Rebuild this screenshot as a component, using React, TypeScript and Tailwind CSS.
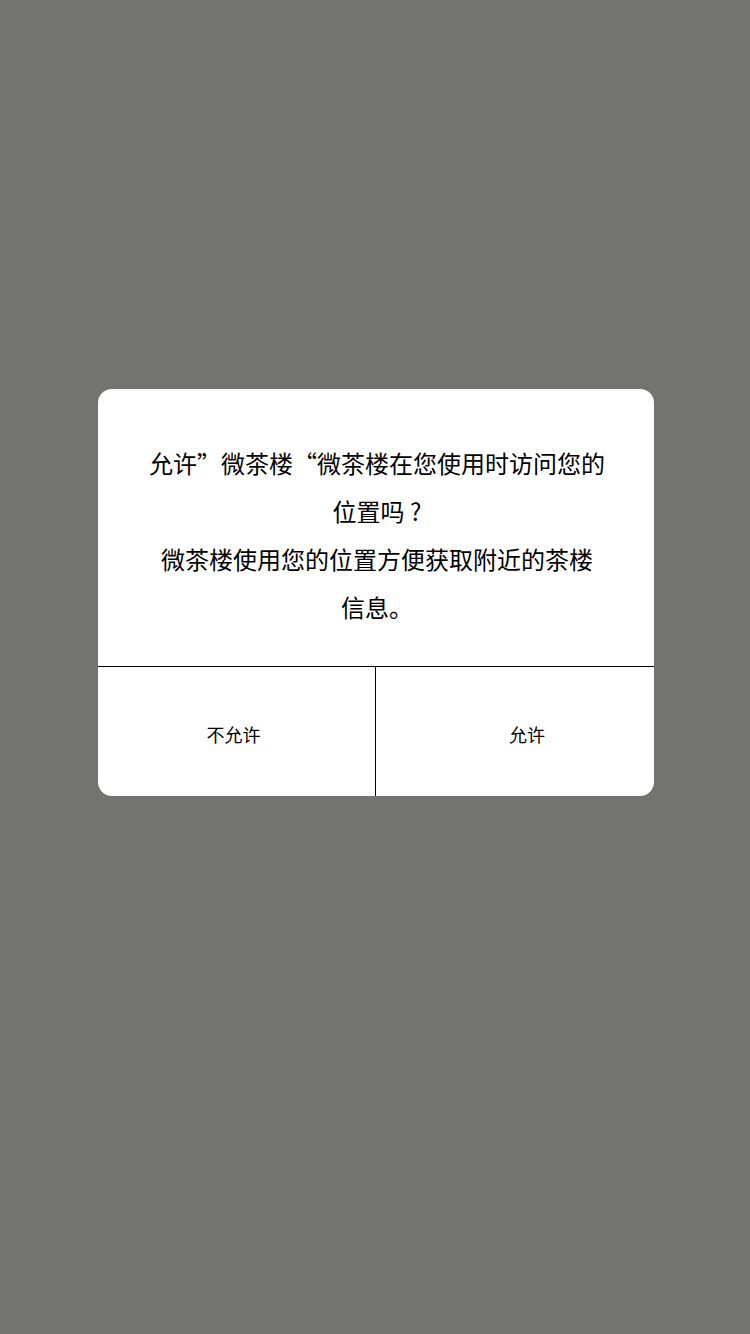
import React from "react";

const App = () => {
  return (
    <div
      className="w-[750px] h-[1334px] bg-[#737471] flex flex-col items-start pl-[98px] pt-[389px]"
      style={{ fontFamily: '"Noto Sans CJK SC", "Noto Sans", sans-serif' }}
    >
      {/* Location permission dialog */}
      <div className="w-[556px] bg-white rounded-[14px] overflow-hidden">
        <div className="pt-[50px] pb-[35px] pl-[2px] text-center text-[24px] leading-[48px] text-black">
          <p>
            允许”微茶楼“微茶楼在您使用时访问您的
            <br />
            位置吗 ?
          </p>
          <p>
            微茶楼使用您的位置方便获取附近的茶楼
            <br />
            信息。
          </p>
        </div>
        <div className="flex h-[130px] border-t border-black">
          <button className="w-[278px] shrink-0 flex items-center justify-center pt-[6px] pr-[6px] text-[18px] text-black border-r border-black">
            不允许
          </button>
          <button className="flex-1 flex items-center justify-center pt-[6px] pl-[24px] text-[18px] text-black">
            允许
          </button>
        </div>
      </div>
    </div>
  );
};

export default App;
